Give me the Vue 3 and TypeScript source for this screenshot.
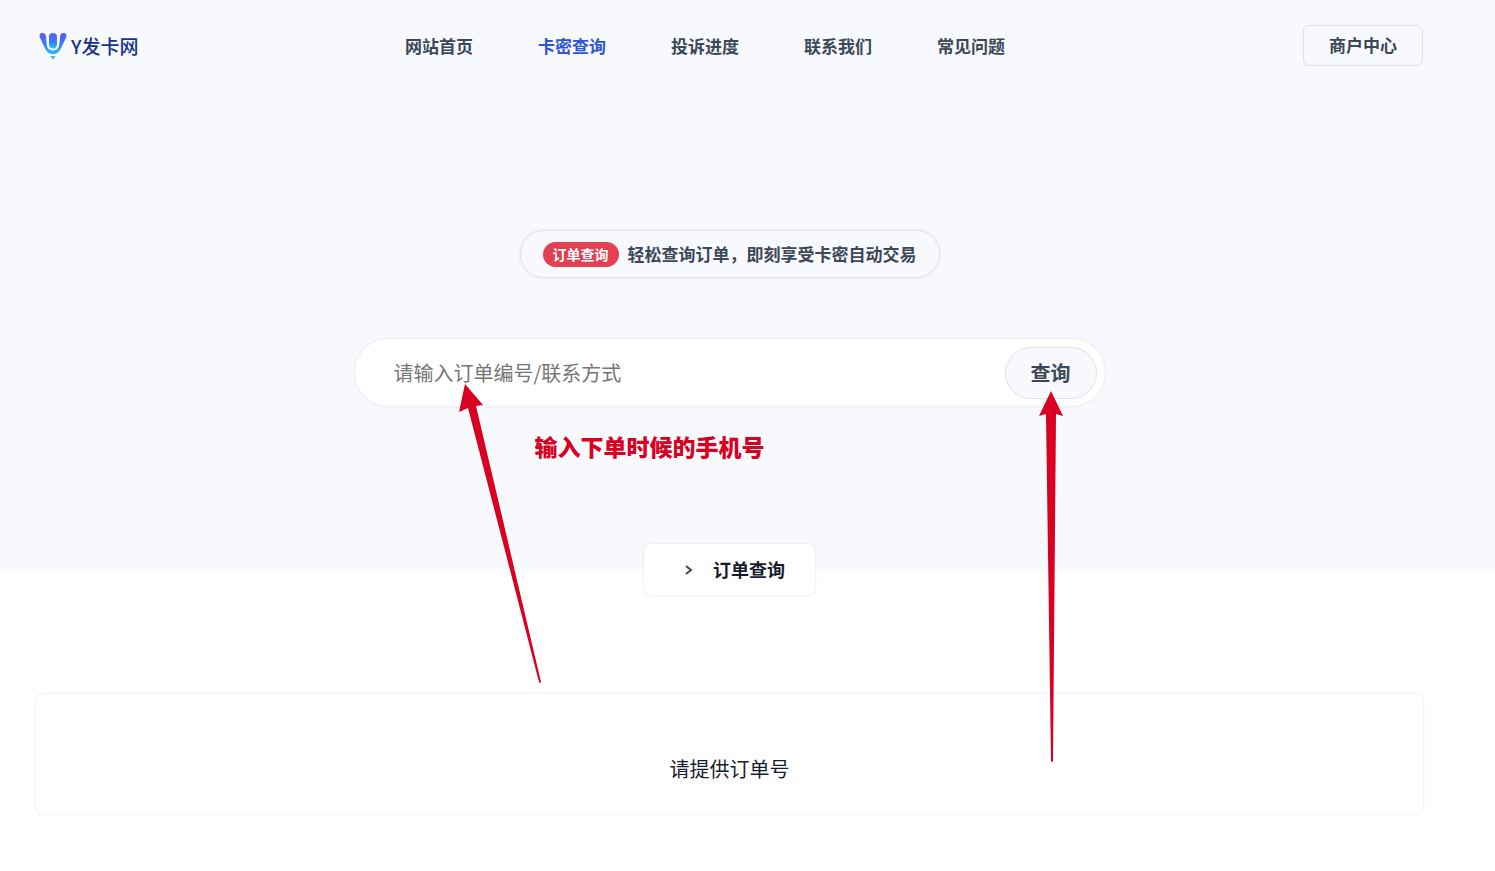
<script setup lang="ts">
import { ref } from 'vue'

interface NavItem {
  label: string
  active?: boolean
}

const navItems: NavItem[] = [
  { label: '网站首页' },
  { label: '卡密查询', active: true },
  { label: '投诉进度' },
  { label: '联系我们' },
  { label: '常见问题' },
]

const keyword = ref('')
const message = ref('请提供订单号')
</script>

<template>
  <div class="page">
    <section class="hero">
      <header class="topbar">
        <a class="brand" href="#">
          <svg class="brand-mark" viewBox="0 0 28 28" aria-hidden="true">
            <defs>
              <linearGradient id="mark" x1="0" y1="0" x2="0" y2="1">
                <stop offset="0" stop-color="#5a5bf5" />
                <stop offset="0.55" stop-color="#3b7cf8" />
                <stop offset="1" stop-color="#27c3f5" />
              </linearGradient>
            </defs>
            <path
              fill="url(#mark)"
              d="M3.4 1C5.4 1 6.7 2.2 6.9 4L7.7 12.6C8 16.3 10.4 18.6 14 18.6S20 16.3 20.3 12.6L21.1 4C21.3 2.2 22.6 1 24.6 1C27.2 1 28 3.2 27.1 5.4L22.4 15.6C20.4 20 18 22.2 14 22.2S7.6 20 5.6 15.6L.9 5.4C0 3.2.8 1 3.4 1Z"
            />
            <path
              fill="url(#mark)"
              d="M10 4.5C10 2.3 11.6 1 14 1S18 2.3 18 4.5V12.5C18 15 16.3 16.4 14 16.4S10 15 10 12.5Z"
            />
            <path fill="#35a0ef" d="M11.2 23.7Q14 24.7 16.8 23.7L14.8 26.4Q14 27.1 13.2 26.4Z" />
          </svg>
          <span class="brand-name">Y发卡网</span>
        </a>
        <nav class="nav" aria-label="主导航">
          <a
            v-for="item in navItems"
            :key="item.label"
            class="nav-link"
            :class="{ active: item.active }"
            href="#"
          >{{ item.label }}</a>
        </nav>
        <a class="merchant" href="#">商户中心</a>
      </header>

      <div class="notice">
        <span class="badge">订单查询</span>
        <span class="notice-text">轻松查询订单，即刻享受卡密自动交易</span>
      </div>

      <div class="search-area">
        <form class="search" @submit.prevent>
          <input
            v-model="keyword"
            class="search-input"
            type="text"
            aria-label="请输入订单编号/联系方式"
            placeholder="请输入订单编号/联系方式"
          />
          <button class="search-button" type="submit">查询</button>
        </form>
        <div class="guide">
          <svg class="guide-arrows" viewBox="0 0 750 430" aria-hidden="true">
            <path d="M110 45L128 66L121 67L186 343Q185 345 184 343L113 69L104 73Z" />
            <path d="M696 52L708 77L701 75L698 422Q697 424 696 422L691 75L684 77Z" />
          </svg>
          <span class="guide-text">输入下单时候的手机号</span>
        </div>
      </div>
    </section>

    <main class="content">
      <h1 class="section-title">
        <svg class="chevron" viewBox="0 0 8 10" aria-hidden="true">
          <path d="M1 1L6 5L1 9" />
        </svg>
        <span>订单查询</span>
      </h1>
      <section class="result">{{ message }}</section>
    </main>
  </div>
</template>

<style>
body {
  margin: 0;
  background: #fff;
}
</style>

<style scoped>
.page {
  font-family: "Noto Sans CJK SC", "Noto Sans", sans-serif;
  font-size: 17px;
  color: #3c4858;
}

.page * {
  box-sizing: border-box;
}

a {
  color: inherit;
  text-decoration: none;
}

.hero {
  display: flex;
  flex-direction: column;
  align-items: center;
  padding: 25px 72px 163px 36px;
  background: #f8f9fd;
}

.topbar {
  display: flex;
  align-items: center;
  align-self: stretch;
}

.brand {
  display: flex;
  align-items: center;
  gap: 4px;
  width: 369px;
  padding: 1px 3px 0;
}

.brand-mark {
  width: 28px;
  height: 28px;
}

.brand-name {
  font-size: 19px;
  line-height: 28px;
  font-weight: 500;
  color: #15338f;
}

.nav {
  display: flex;
  gap: 65px;
}

.nav-link {
  font-weight: 700;
  line-height: 24px;
  white-space: nowrap;
}

.nav-link.active {
  color: #2f55d4;
}

.merchant {
  margin-left: auto;
  padding: 7px 25px 9px;
  border: 1px solid #dee2e8;
  border-radius: 6px;
  font-weight: 700;
  line-height: 23px;
  white-space: nowrap;
}

.notice {
  display: flex;
  align-items: center;
  gap: 9px;
  margin-top: 164px;
  padding: 10px 22px;
  border: 1px solid #dfe2e7;
  border-radius: 30px;
  box-shadow: 0 0 3px rgba(60, 72, 88, 0.15);
}

.badge {
  padding: 2px 10px;
  border-radius: 13px;
  background: #e43f52;
  color: #fff;
  font-size: 14px;
  font-weight: 700;
  line-height: 21px;
}

.notice-text {
  font-weight: 700;
  line-height: 26px;
}

.search-area {
  position: relative;
  width: 100%;
  max-width: 750px;
  margin-top: 61px;
}

.search {
  display: flex;
  align-items: center;
  padding: 8px 8px 7px 39px;
  border-radius: 34px;
  background: #fff;
  box-shadow: 0 0 3px rgba(60, 72, 88, 0.15);
}

.search-input {
  flex: 1;
  min-width: 0;
  padding: 0;
  border: 0;
  outline: 0;
  background: transparent;
  font: inherit;
  font-size: 20px;
  line-height: 30px;
  color: #3c4858;
}

.search-input::placeholder {
  color: #757575;
  opacity: 1;
}

.search-button {
  padding: 10px 25px;
  border: 1px solid #dee2e8;
  border-radius: 26px;
  background: #f8f9fc;
  color: #3c4858;
  font: inherit;
  font-size: 20px;
  font-weight: 700;
  line-height: 30px;
}

.guide {
  position: absolute;
  inset: 0 0 auto;
  pointer-events: none;
  color: #d90022;
}

.guide-arrows {
  display: block;
  width: 100%;
  fill: currentColor;
}

.guide-text {
  position: absolute;
  top: 91px;
  left: 180px;
  font-size: 23px;
  font-weight: 900;
  line-height: 32px;
  white-space: nowrap;
}

.content {
  display: flex;
  flex-direction: column;
  align-items: center;
  padding: 0 72px 56px 36px;
}

.section-title {
  display: flex;
  align-items: center;
  gap: 20px;
  margin: -25px 0 99px;
  padding: 12px 30px 12px 41px;
  border-radius: 8px;
  background: #fff;
  box-shadow: 0 0 3px rgba(60, 72, 88, 0.15);
  color: #161c2d;
  font-size: 18px;
  line-height: 27px;
  font-weight: 700;
}

.chevron {
  width: 8px;
  height: 10px;
  fill: none;
  stroke: #3c4858;
  stroke-width: 2;
}

.result {
  align-self: stretch;
  padding: 60px 24px 30px;
  border-radius: 8px;
  background: #fff;
  box-shadow: 0 0 3px rgba(60, 72, 88, 0.15);
  color: #161c2d;
  font-size: 20px;
  line-height: 30px;
  text-align: center;
}
</style>
